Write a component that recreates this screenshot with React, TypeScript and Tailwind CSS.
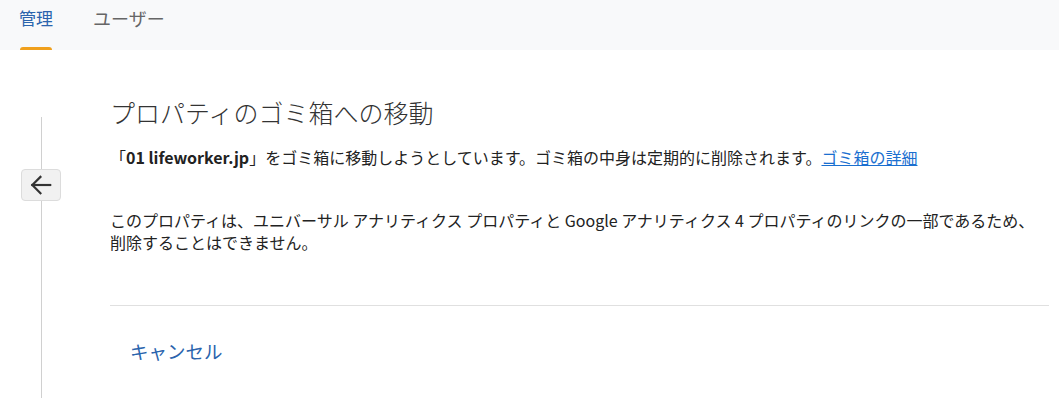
import React from "react";

const font = { fontFamily: '"Noto Sans CJK JP", "Noto Sans", sans-serif' };

function ArrowLeft() {
  return (
    <svg width="26" height="26" viewBox="0 0 24 24" fill="none" stroke="#333" strokeWidth="2" strokeLinecap="square">
      <path d="M20.5 12H4" />
      <path d="M11.5 4.5L4 12l7.5 7.5" />
    </svg>
  );
}

export default function App() {
  return (
    <div className="flex min-h-screen flex-col bg-white text-[#222]" style={font}>
      <div className="flex h-[50px] items-stretch bg-[#f8f9fa] pl-[19px]">
        <div className="flex flex-col">
          <span className="flex-1 pt-[5px] text-[17px] text-[#2a64ad]">管理</span>
          <span className="ml-px h-[3px] w-[32px] rounded-t-sm bg-[#f0a01c]" />
        </div>
        <span className="ml-[40px] pt-[5px] text-[18px] text-[#666]">ユーザー</span>
      </div>

      <div className="flex flex-1">
        <div className="flex w-[82px] flex-col items-center">
          <div className="mt-[67px] h-[52px] w-px bg-[#d0d0d0]" />
          <button className="flex h-[32px] w-[40px] items-center justify-center rounded-sm border border-[#dcdcdc] bg-[#f1f1f1]">
            <ArrowLeft />
          </button>
          <div className="w-px flex-1 bg-[#d0d0d0]" />
        </div>

        <div className="ml-[28px] mr-[10px] flex-1 pt-[45px]">
          <h1 className="text-[25px] font-light leading-[34px] text-[#333]">プロパティのゴミ箱への移動</h1>
          <p className="mt-[17px] text-[16px] leading-[22px]">
            「<span className="font-bold">01 lifeworker.jp</span>」をゴミ箱に移動しようとしています。ゴミ箱の中身は定期的に削除されます。
            <a className="text-[#1a6fd0] underline">ゴミ箱の詳細</a>
          </p>
          <p className="mt-[41px] text-[16px] leading-[22px]">
            このプロパティは、ユニバーサル アナリティクス プロパティと Google アナリティクス 4 プロパティのリンクの一部であるため、削除することはできません。
          </p>
          <div className="mt-[52px] h-px bg-[#e0e0e0]" />
          <button className="ml-[20px] mt-[32px] text-[18.5px] text-[#2a64ad]">キャンセル</button>
        </div>
      </div>
    </div>
  );
}
